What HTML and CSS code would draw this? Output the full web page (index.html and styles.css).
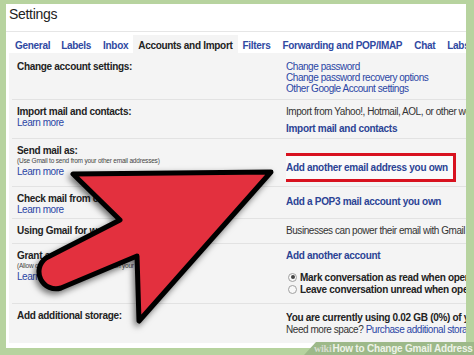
FILE: index.html
```html
<!DOCTYPE html>
<html lang="en">
<head>
  <meta charset="UTF-8" />
  <title>How to Change Gmail Address</title>
  <link rel="stylesheet" href="styles.css">
</head>
<body>
  <div class="page">
    <div class="panel">
      <div class="head">Settings</div>
      <div class="tabs">
        <a>General</a>
        <a>Labels</a>
        <a>Inbox</a>
        <a class="active">Accounts and Import</a>
        <a>Filters</a>
        <a>Forwarding and POP/IMAP</a>
        <a>Chat</a>
        <a>Labs</a>
      </div>
      <div class="content">
        <div class="row account">
          <div class="label"><b>Change account settings:</b></div>
          <div class="value">
            <a>Change password</a>
            <a>Change password recovery options</a>
            <a>Other Google Account settings</a>
          </div>
        </div>
        <div class="row import">
          <div class="label"><b>Import mail and contacts:</b><a>Learn more</a></div>
          <div class="value">
            <span>Import from Yahoo!, Hotmail, AOL, or other webmail or POP3 accounts.</span>
            <a class="strong gap">Import mail and contacts</a>
          </div>
        </div>
        <div class="row sendas">
          <div class="label">
            <b>Send mail as:</b>
            <small>(Use Gmail to send from your other email addresses)</small>
            <a>Learn more</a>
          </div>
          <div class="value">
            <div class="boxed"><a class="strong">Add another email address you own</a></div>
          </div>
        </div>
        <div class="row check">
          <div class="label"><b>Check mail from other accounts:</b><a>Learn more</a></div>
          <div class="value"><a class="strong">Add a POP3 mail account you own</a></div>
        </div>
        <div class="row work">
          <div class="label"><b>Using Gmail for work?</b></div>
          <div class="value"><span>Businesses can power their email with Gmail for Work.</span></div>
        </div>
        <div class="row grant">
          <div class="label">
            <b>Grant access to your account:</b>
            <small>(Allow others to read and send mail on your behalf)</small>
            <a>Learn more</a>
          </div>
          <div class="value">
            <a class="strong">Add another account</a>
            <div class="radios">
              <label><span class="radio on"></span>Mark conversation as read when opened by others</label>
              <label><span class="radio"></span>Leave conversation unread when opened by others</label>
            </div>
          </div>
        </div>
        <div class="row storage">
          <div class="label"><b>Add additional storage:</b></div>
          <div class="value">
            <b>You are currently using 0.02 GB (0%) of your 15 GB.</b>
            <span>Need more space? <a class="inline">Purchase additional storage</a></span>
          </div>
        </div>
      </div>
    </div>

    <div class="mark"><span class="wiki">wiki</span><b>How</b> to Change Gmail Address</div>

    <svg class="arrow" width="474" height="355" viewBox="0 0 474 355">
      <path d="M73 174 L271 172 L139 321 L137 256 L61 288 A17 17 0 0 1 46 258 L120 220 Z" />
    </svg>
  </div>
</body>
</html>
```

FILE: styles.css
```css
* { margin: 0; padding: 0; box-sizing: border-box; }
body {
  background: #b7d39f;
  font-family: 'Liberation Sans', Arial, sans-serif;
  font-size: 10px;
  letter-spacing: -0.45px;
  line-height: 11px;
  color: #333;
}
b, .strong, .tabs a { letter-spacing: -0.3px; }
a { color: #2b46a5; display: block; }
.page {
  position: relative;
  width: 474px;
  height: 355px;
  overflow: hidden;
  padding: 4px 0 0 6px;
}
.panel {
  width: 460px;
  height: 344px;
  background: #fff;
  padding: 0 0 5px 3px;
  overflow: hidden;
  display: flex;
  flex-direction: column;
}
.head {
  height: 27px;
  line-height: 20px;
  font-size: 14px;
  letter-spacing: -0.3px;
  color: #222;
}
.tabs {
  display: flex;
  align-items: flex-end;
  height: 22px;
  border-top: 1px solid #e6e6e6;
  margin-left: -3px;
  padding-left: 3px;
  white-space: nowrap;
}
.tabs a {
  height: 18px;
  padding: 5px 6px 0;
  font-weight: bold;
  color: #2f49a2;
}
.tabs a.active { background: #f4f4f4; color: #222; padding: 5px 5px 0; margin: 0 0 0 -1px; }
.tabs a:nth-child(2), .tabs a:nth-child(5) { margin-left: -1px; }
.content {
  flex: 1;
  background: #f4f4f4;
  padding-left: 3px;
}
.row {
  display: flex;
  border-top: 1px solid #e2e2e2;
  padding: 6px 0 0 5px;
  white-space: nowrap;
}
.label { width: 269px; flex: none; }
.label b { display: block; color: #222; }
.label small {
  display: block;
  font-size: 6.5px;
  line-height: 10px;
  letter-spacing: -0.2px;
  color: #444;
}
.value { flex: 1; overflow: hidden; }
.value span, .value b { display: block; }
.value b { color: #222; }
a.strong { font-weight: bold; color: #2b4394; }
a.inline { display: inline; }
.gap { margin-top: 6px; }

.account { border-top: none; height: 46px; padding-top: 8px; }
.import { height: 39px; }
.sendas { height: 48px; }
.check { height: 32px; }
.check .value { padding-top: 3px; }
.work { height: 25px; }
.grant { height: 60px; }
.storage { flex: 1; }
.storage .value { padding-top: 2px; line-height: 12px; }

.boxed {
  display: inline-block;
  margin: 8px 0 0 -9px;
  padding: 6px 5px 6px 6px;
  border: 3px solid #d8121f;
  background: #fafafa;
}
.radios { margin-top: 10px; }
.radios label {
  display: flex;
  align-items: center;
  height: 12.5px;
  font-weight: bold;
  letter-spacing: -0.3px;
  color: #222;
  margin-left: 2px;
}
.radios .radio {
  flex: none;
  width: 9px;
  height: 9px;
  border-radius: 50%;
  border: 1px solid #a0a0a0;
  background: #f8f8f8;
  margin-right: 3px;
  display: flex;
  align-items: center;
  justify-content: center;
}
.radio.on::after {
  content: "";
  width: 4px;
  height: 4px;
  border-radius: 50%;
  background: #444;
}

.mark {
  position: absolute;
  right: 0;
  bottom: 0;
  width: 170px;
  height: 13px;
  background: #9db989;
  clip-path: polygon(12px 0, 100% 0, 100% 100%, 0 100%);
  padding-left: 10px;
  font-size: 10px;
  line-height: 13px;
  font-weight: bold;
  color: #eef3e8;
  letter-spacing: -0.2px;
  white-space: nowrap;
}
.mark .wiki {
  font-family: 'Liberation Serif', serif;
  color: #d7dccf;
  margin-right: 1px;
}
.arrow {
  position: absolute;
  left: 0;
  top: 0;
  pointer-events: none;
  filter: drop-shadow(-2px 3px 3px rgba(0, 0, 0, 0.55));
}
.arrow path {
  fill: #e3303e;
  stroke: #000;
  stroke-width: 5;
  stroke-linejoin: round;
}
```
